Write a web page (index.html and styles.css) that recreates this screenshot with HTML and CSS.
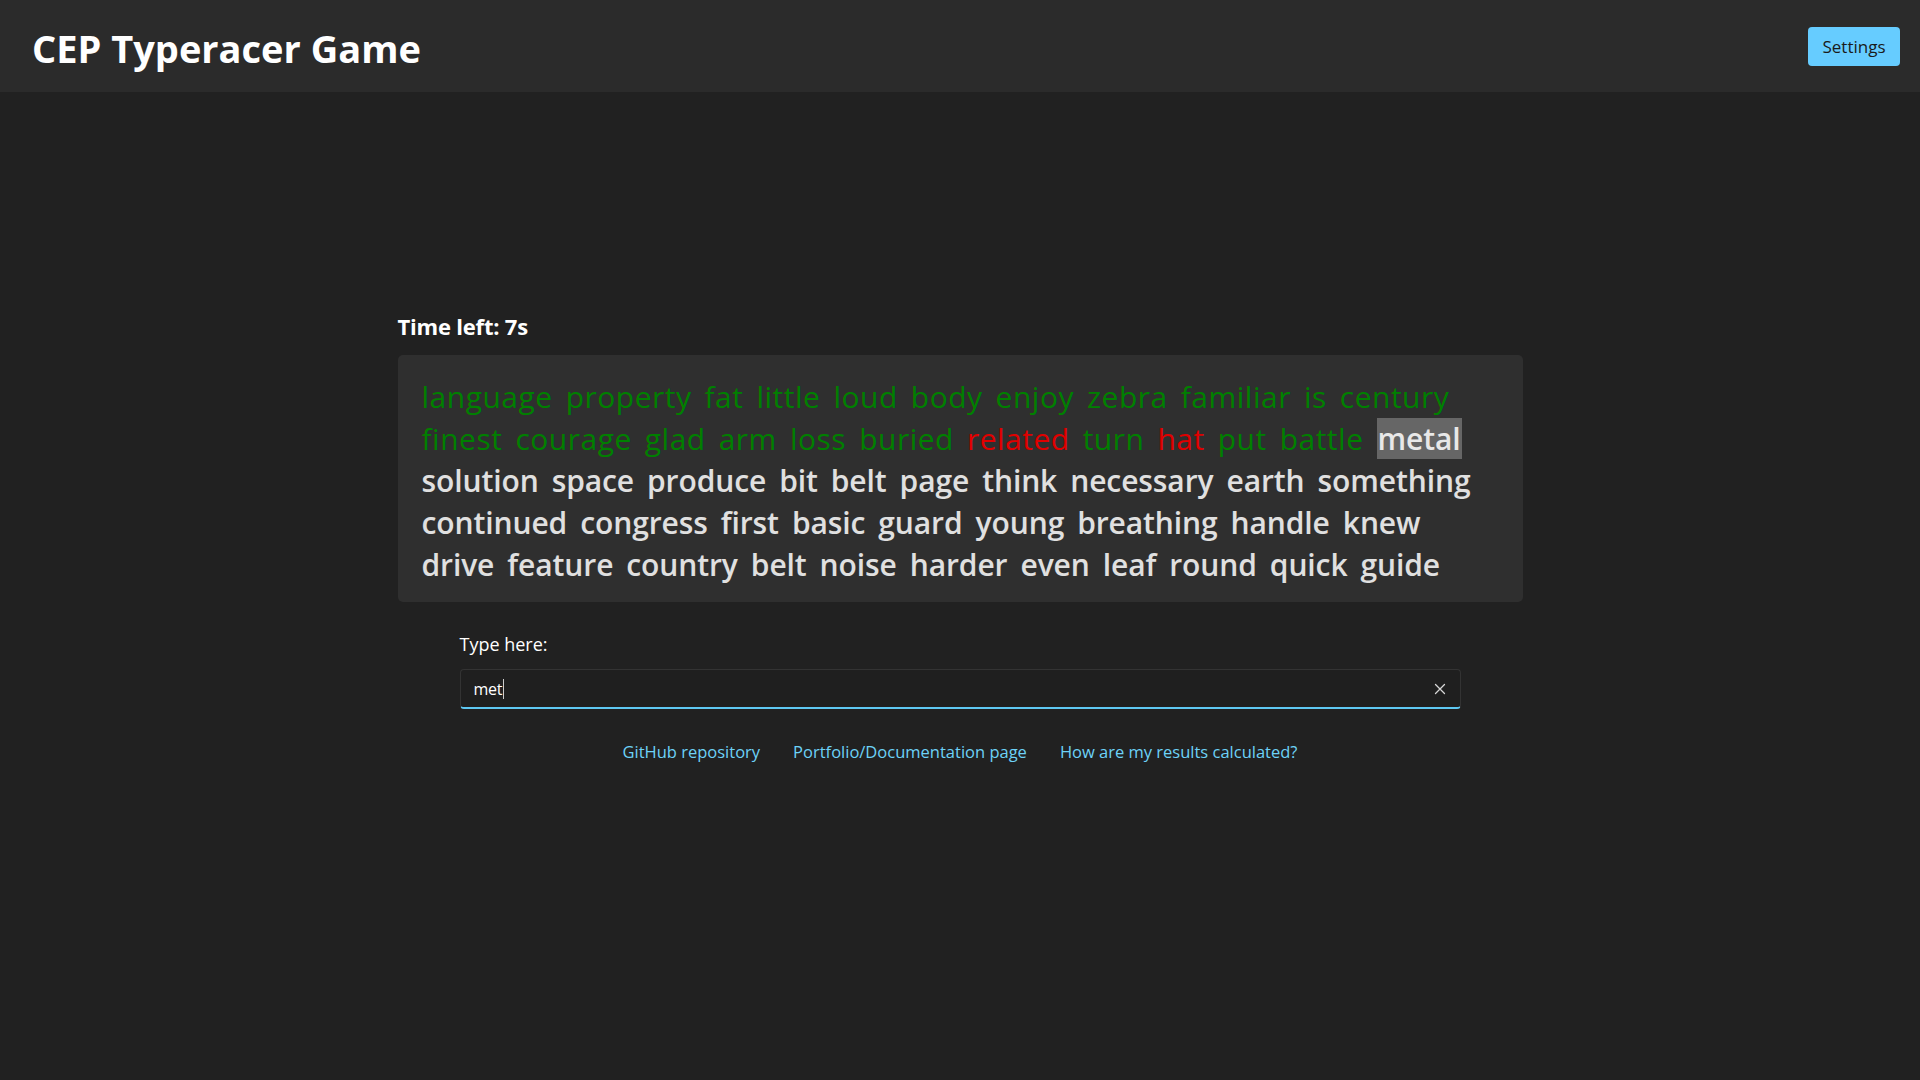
FILE: index.html
```html
<!DOCTYPE html>
<html lang="en">
<head>
<meta charset="utf-8">
<title>CEP Typeracer Game</title>
<link rel="stylesheet" href="styles.css">
</head>
<body>
<header class="topbar">
  <h1 class="title">CEP Typeracer Game</h1>
  <button class="settings" type="button">Settings</button>
</header>
<main class="game">
  <section class="panel">
    <div class="timer">Time left: 7s</div>
    <div class="words">
      <div class="line">
        <span class="w ok">language</span><span class="w ok">property</span><span class="w ok">fat</span><span class="w ok">little</span><span class="w ok">loud</span><span class="w ok">body</span><span class="w ok">enjoy</span><span class="w ok">zebra</span><span class="w ok">familiar</span><span class="w ok">is</span><span class="w ok">century</span>
      </div>
      <div class="line">
        <span class="w ok">finest</span><span class="w ok">courage</span><span class="w ok">glad</span><span class="w ok">arm</span><span class="w ok">loss</span><span class="w ok">buried</span><span class="w bad">related</span><span class="w ok">turn</span><span class="w bad">hat</span><span class="w ok">put</span><span class="w ok">battle</span><span class="w current">metal</span>
      </div>
      <div class="line">
        <span class="w">solution</span><span class="w">space</span><span class="w">produce</span><span class="w">bit</span><span class="w">belt</span><span class="w">page</span><span class="w">think</span><span class="w">necessary</span><span class="w">earth</span><span class="w">something</span>
      </div>
      <div class="line">
        <span class="w">continued</span><span class="w">congress</span><span class="w">first</span><span class="w">basic</span><span class="w">guard</span><span class="w">young</span><span class="w">breathing</span><span class="w">handle</span><span class="w">knew</span>
      </div>
      <div class="line">
        <span class="w">drive</span><span class="w">feature</span><span class="w">country</span><span class="w">belt</span><span class="w">noise</span><span class="w">harder</span><span class="w">even</span><span class="w">leaf</span><span class="w">round</span><span class="w">quick</span><span class="w">guide</span>
      </div>
    </div>
    <div class="typing">
      <label class="label" for="typed">Type here:</label>
      <div class="input">
        <span class="value" id="typed">met</span><span class="caret"></span>
        <svg class="clear" width="12" height="12" viewBox="0 0 12 12" aria-hidden="true"><path d="M1.5 1.5 L10.5 10.5 M10.5 1.5 L1.5 10.5" stroke="#d6d6d6" stroke-width="1.3" stroke-linecap="round" fill="none"/></svg>
      </div>
    </div>
    <nav class="links">
      <a href="#">GitHub repository</a>
      <a href="#">Portfolio/Documentation page</a>
      <a href="#">How are my results calculated?</a>
    </nav>
  </section>
</main>
</body>
</html>
```
FILE: styles.css
```css
* { box-sizing: border-box; }
html, body { margin: 0; padding: 0; }
body {
  background: #212121;
  color: #ffffff;
  font-family: "Open Sans", "Noto Sans", sans-serif;
  height: 1080px;
  overflow: hidden;
}
.topbar {
  height: 92px;
  background: #2b2b2b;
  display: flex;
  align-items: center;
  justify-content: space-between;
  padding: 0 20px 0 32px;
}
.title {
  margin: 3px 0 0;
  font-size: 38px;
  font-weight: 700;
  letter-spacing: 0;
  color: #ffffff;
}
.settings {
  background: #66ccff;
  color: #1a1a1a;
  border: none;
  border-radius: 4px;
  height: 39px;
  width: 92px;
  font-family: inherit;
  font-size: 17px;
  margin-top: 0;
  padding: 0;
}
.game {
  display: flex;
  justify-content: center;
  padding-top: 219px;
}
.panel {
  width: 1125px;
  display: flex;
  flex-direction: column;
}
.timer {
  font-size: 22px;
  font-weight: 700;
  line-height: 30px;
  letter-spacing: -0.2px;
  margin-bottom: 14px;
}
.words {
  background: #2f2f2f;
  border-radius: 5px;
  padding: 20px 24px 17px;
  font-size: 30px;
  font-weight: 600;
  color: #e0e0e0;
}
.line {
  display: flex;
  column-gap: 13px;
  height: 42px;
  align-items: center;
  letter-spacing: -0.1px;
}
.w { line-height: 41px; }
.ok { color: #008000; font-weight: 400; letter-spacing: 0.5px; }
.bad { color: #e00000; font-weight: 400; letter-spacing: 0.5px; }
.current { background: #666666; color: #e8e8e8; padding: 0 1px; }
.typing {
  width: 1001px;
  align-self: center;
  margin-top: 30px;
  display: flex;
  flex-direction: column;
}
.label {
  font-size: 18px;
  line-height: 24px;
  color: #ffffff;
  margin-bottom: 13px;
}
.input {
  height: 40px;
  background: #1f1f1f;
  border: 1px solid #333333;
  border-bottom: 2px solid #5ec8f2;
  border-radius: 4px;
  display: flex;
  align-items: center;
  padding: 0 14px 0 13px;
  font-size: 16px;
  color: #ffffff;
}
.value { letter-spacing: -0.3px; }
.caret { width: 1px; height: 20px; background: #cccccc; margin-left: 1px; }
.clear { margin-left: auto; }
.links {
  margin-top: 31px;
  display: flex;
  justify-content: center;
  gap: 33px;
  font-size: 16.5px;
  line-height: 24px;
}
.links a {
  color: #6dd2f7;
  text-decoration: none;
}
```
